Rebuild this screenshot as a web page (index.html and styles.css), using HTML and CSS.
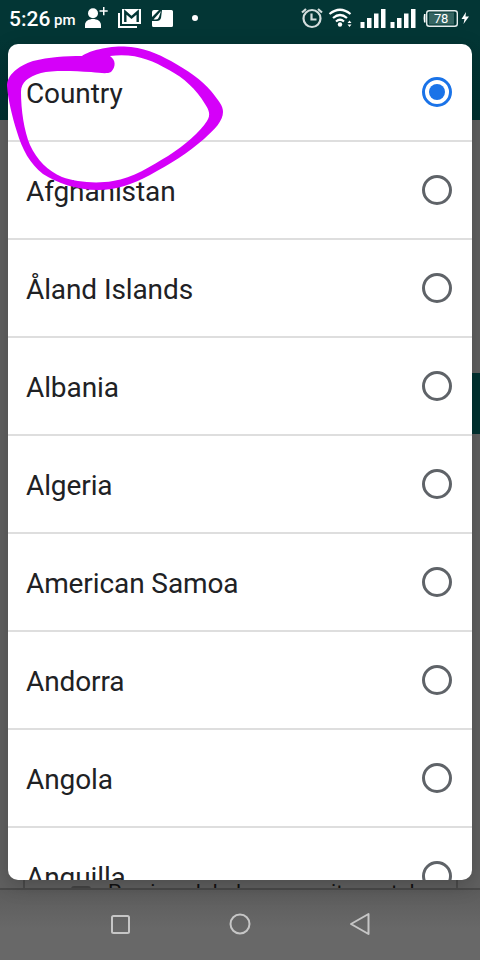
FILE: index.html
```html
<!DOCTYPE html>
<html lang="en">
<head>
<meta charset="utf-8">
<title>Country</title>
<link rel="stylesheet" href="styles.css">
</head>
<body>
<div class="screen">
  <header class="status">
    <span class="time">5:26</span><span class="ampm">pm</span>
    <svg class="status-icons" width="405" height="38" viewBox="75 0 405 38" fill="#fff">
      <circle cx="93" cy="13.2" r="5"/><path d="M85 28v-3c0-4 4-6 8-6s8 2 8 6v3zM103 7h1.500v3.200h3.200v1.500h-3.200v3.500H103v-3.500h-3.500v-1.500h3.500z"/>
      <path d="M118 13h2v13h17v2h-19zM122 9h19v15h-19z"/><path d="M125.300 22V12l6.200 5.500 6.200-5.500v10" fill="none" stroke="#033635" stroke-width="2.400"/>
      <path d="M162 10h9.500q1.500 0 1.500 1.500v14q0 1.500-1.500 1.500h-18q-1.500 0-1.500-1.500V21h5q3 0 4-3zM152 17v-5q0-2 2-2h5zM153.500 19.500l7.500-8.500-2 6q-1 2.500-3 2.500z"/>
      <circle cx="195" cy="18" r="3"/>
      <g fill="none" stroke="#d3dddd" stroke-width="2.200"><circle cx="312" cy="18.500" r="8.500"/><path d="M311.500 13.500v6h5M302 12.500l4-3.500M322 12.500l-4-3.500"/></g>
      <g fill="none" stroke="#fff" stroke-width="2.200"><path d="M329.500 14q10.500-8.500 21 0M333 18q7-6 14 0M336 21.500q4-3.500 8 0"/></g>
      <circle cx="340" cy="24.500" r="2.200"/><path d="M347.500 23l2-2.500 2 2.500zM347.500 24.500l2 2.500 2-2.500z"/>
      <path d="M360.500 22h4v6h-4zM367 18h4.500v10H367zM374 13.500h4.500V28H374zM381 9h4.500v19H381zM390.500 22h4v6h-4zM397 18h4.500v10H397zM404 13.500h4.500V28H404zM411 9h4.500v19H411z"/>
      <path d="M425.500 14v8.500H424q-1-4 0-8.500z"/><rect x="429" y="12.500" width="25" height="12" fill="#356461"/><rect x="426.700" y="10.700" width="30.600" height="15.600" rx="2.500" fill="none" stroke="#e7eeee" stroke-width="1.400"/>
      <text class="battery" x="434" y="23">78</text>
      <path d="M466 12l-4.500 7h3l-1 5 5.500-7.500h-3.500z"/>
    </svg>
  </header>
  <div class="appbar"></div>
  <main class="page"><div class="banner"></div>
    <div class="panel"><span class="check"></span><span class="caption">Previous label community portal</span></div>
  </main>
  <nav class="nav">
    <svg width="480" height="70" viewBox="0 890 480 70" fill="none" stroke="#c6c6c6" stroke-width="2" stroke-linejoin="round"><rect x="112" y="916" width="17" height="17" rx="1.500"/><circle cx="240" cy="924" r="9.500"/><path d="M351 924l17.500-10v20z"/></svg>
  </nav>
  <div class="dialog">
    <div class="row"><span class="label">Country</span><span class="radio on"></span></div>
    <div class="row"><span class="label">Afghanistan</span><span class="radio"></span></div>
    <div class="row"><span class="label">Åland Islands</span><span class="radio"></span></div>
    <div class="row"><span class="label">Albania</span><span class="radio"></span></div>
    <div class="row"><span class="label">Algeria</span><span class="radio"></span></div>
    <div class="row"><span class="label">American Samoa</span><span class="radio"></span></div>
    <div class="row"><span class="label">Andorra</span><span class="radio"></span></div>
    <div class="row"><span class="label">Angola</span><span class="radio"></span></div>
    <div class="row"><span class="label">Anguilla</span><span class="radio"></span></div>
  </div>
  <svg class="scribble" width="240" height="200" viewBox="0 0 240 200"><path fill="#d500f9" fill-rule="evenodd" d="M82 56C87 52 105 46 124 46.500C143 47 158 54 171 61C187 70 202 80 211 91C219 101 223 106 223 112C223 121 215 129 204 139C188 153 170 164 150 175C133 184 116 190 98 190C77 190 57 183 43 174C30 164 22 149 17 132C12 116 8 99 7 86C7 75 18 66 33 61C49 57 65 56 82 56ZM110 56C116 60 116 67 111 72C107 74 101 73 91 72C73 71 53 70 41 73C28 77 21 82 21 92C21 110 24 131 30 145C37 160 48 171 62 177C76 182 96 184 113 181C133 178 151 166 168 156C185 145 200 132 207 121C211 115 209 110 205 104C196 89 184 78 169 70C151 60 135 53 110 56Z"/></svg>
</div>
</body>
</html>
```

FILE: styles.css
```css
* { box-sizing: border-box; }
body { margin: 0; font-family: Roboto, sans-serif; }
.screen { position: relative; width: 480px; height: 960px; overflow: hidden; display: flex; flex-direction: column; background: #606060; }
.status { height: 38px; flex: none; display: flex; align-items: flex-start; background: #033635; color: #fff; }
.time { width: 44px; padding-left: 9px; font-size: 21px; font-weight: 500; line-height: 38px; letter-spacing: 0; }
.ampm { width: 31px; padding-left: 10px; font-size: 15px; font-weight: 500; line-height: 41px; }
.status-icons { flex: none; }
.battery { font-size: 13px; letter-spacing: -.3px; }
.appbar { height: 82px; flex: none; background: linear-gradient(#033635, #003130); }
.page { height: 770px; flex: none; display: flex; flex-direction: column; justify-content: space-between; overflow: hidden; background: #606060; border-bottom: 2px solid #4a4a4a; }
.banner { height: 61px; margin: 253px 0 0 23px; background: #003231; }
.panel { height: 12px; margin: 0 22px 0 23px; padding-left: 46px; display: flex; align-items: flex-start; overflow: hidden; border: solid #4b4b4b; border-width: 0 2px; }
.check { width: 20px; height: 16px; margin: 10px 17px 0 0; flex: none; border: 2px solid #444; border-radius: 3px; }
.caption { padding-top: 6px; font-size: 21px; line-height: 21px; letter-spacing: .2px; white-space: nowrap; color: #111; }
.nav { height: 70px; flex: none; background: linear-gradient(#5c5c5c, #686868 55%); }
.nav svg { display: block; }
.dialog { position: absolute; top: 44px; left: 8px; width: 464px; height: 836px; overflow: hidden; border-radius: 10px; background: #fff; box-shadow: 0 5px 20px rgba(0,0,0,.22); }
.row { height: 98px; padding: 0 20px 0 18px; display: flex; align-items: center; justify-content: space-between; border-bottom: 2px solid #dedede; }
.label { padding-top: 3px; font-size: 28px; line-height: 36px; letter-spacing: -.1px; color: #202124; }
.radio { width: 30px; height: 30px; display: flex; align-items: center; justify-content: center; border: 3px solid #5f6368; border-radius: 50%; }
.radio.on { border-color: #1a73e8; }
.radio.on::after { content: ""; width: 16px; height: 16px; border-radius: 50%; background: #1a73e8; }
.scribble { position: absolute; top: 0; left: 0; }
```
